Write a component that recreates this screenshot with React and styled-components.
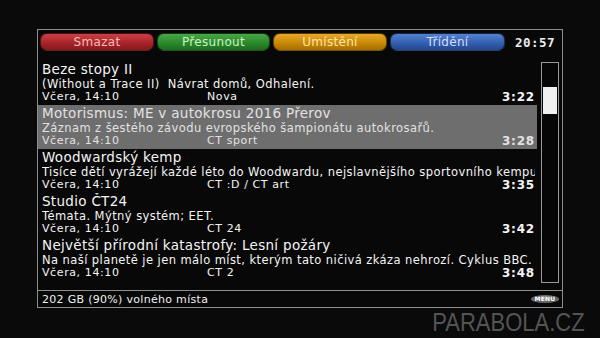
import React from 'react'
import styled, { createGlobalStyle } from 'styled-components'

const GlobalStyle = createGlobalStyle`
    html, body {
        margin: 0;
        padding: 0;
        background: #0a0a0a;
    }
    body {
        width: 600px;
        height: 338px;
        overflow: hidden;
        font-family: "DejaVu Sans", Verdana, sans-serif;
    }
`

// Data
const recordings = [
    {
        title: 'Beze stopy II',
        desc: '(Without a Trace II)\u00a0 Návrat domů, Odhalení.',
        date: 'Včera, 14:10',
        channel: 'Nova',
        length: '3:22',
    },
    {
        title: 'Motorismus: ME v autokrosu 2016 Přerov',
        desc: 'Záznam z šestého závodu evropského šampionátu autokrosařů.',
        date: 'Včera, 14:10',
        channel: 'CT sport',
        length: '3:28',
        selected: true,
    },
    {
        title: 'Woodwardský kemp',
        desc: 'Tisíce dětí vyrážejí každé léto do Woodwardu, nejslavnějšího sportovního kempu',
        date: 'Včera, 14:10',
        channel: 'CT :D / CT art',
        length: '3:35',
    },
    {
        title: 'Studio ČT24',
        desc: 'Témata. Mýtný systém; EET.',
        date: 'Včera, 14:10',
        channel: 'CT 24',
        length: '3:42',
    },
    {
        title: 'Největší přírodní katastrofy: Lesní požáry',
        desc: 'Na naší planetě je jen málo míst, kterým tato ničivá zkáza nehrozí. Cyklus BBC.',
        date: 'Včera, 14:10',
        channel: 'CT 2',
        length: '3:48',
    },
]

const buttons = {
    red: { top: '#cc4046', mid: '#a8242a', bottom: '#861a1e', text: '#f6bcbc' },
    green: { top: '#4aa648', mid: '#2a8a2a', bottom: '#1e6c1e', text: '#cdf2c4' },
    yellow: { top: '#e8a828', mid: '#c88a08', bottom: '#a86c00', text: '#ffe4a6' },
    blue: { top: '#5282d0', mid: '#3460b0', bottom: '#24468e', text: '#d4deff' },
}

const Screen = styled.div`
    width: 600px;
    height: 338px;
    display: flex;
    flex-direction: column;
    background: #0a0a0a;
`

const Frame = styled.div`
    box-sizing: border-box;
    margin: 29px 0 0 37px;
    width: 526px;
    height: 279px;
    border: 1px solid #8e8e8e;
    display: flex;
    flex-direction: column;
    background: #080808;
`

const Header = styled.div`
    height: 31px;
    box-sizing: border-box;
    padding: 3px 0 0 2px;
    display: flex;
    align-items: flex-start;
    gap: 3px;
`

const ColorButton = styled.div`
    width: ${p => p.w}px;
    height: 18px;
    border-radius: 7px;
    box-sizing: border-box;
    border: 1px solid rgba(0, 0, 0, 0.5);
    background: linear-gradient(
        to bottom,
        ${p => buttons[p.color].top} 0%,
        ${p => buttons[p.color].mid} 55%,
        ${p => buttons[p.color].bottom} 100%
    );
    color: ${p => buttons[p.color].text};
    font-size: 12px;
    line-height: 16px;
    letter-spacing: 0.3px;
    text-align: center;
`

const Clock = styled.div`
    flex: 1;
    padding-top: 3px;
    text-align: center;
    font-family: "DejaVu Sans Mono", monospace;
    font-weight: bold;
    font-size: 12.5px;
    line-height: 14px;
    color: #ececec;
    letter-spacing: 0.5px;
`

const Body = styled.div`
    height: 229px;
    display: flex;
`

const List = styled.div`
    width: 499px;
    display: flex;
    flex-direction: column;
`

const Row = styled.div`
    height: 44px;
    box-sizing: border-box;
    padding: 0 2px 0 4px;
    overflow: hidden;
    background: ${p => (p.selected ? '#6e6e6e' : 'transparent')};
    color: ${p => (p.selected ? '#e2e2e2' : '#f4f4f4')};
`

const Title = styled.div`
    font-size: 13.5px;
    line-height: 16px;
    letter-spacing: 0.3px;
    white-space: nowrap;
`

const Desc = styled.div`
    padding-top: 1px;
    font-size: 11.5px;
    line-height: 13px;
    letter-spacing: 0.42px;
    white-space: nowrap;
    overflow: hidden;
`

const Meta = styled.div`
    display: grid;
    grid-template-columns: 165px 1fr auto;
    font-size: 11px;
    line-height: 12px;
    white-space: nowrap;
`

const DateCell = styled.span`
    letter-spacing: 0.6px;
`

const ChannelCell = styled.span`
    letter-spacing: 0.6px;
`

const LengthCell = styled.span`
    font-weight: bold;
    font-size: 12px;
    letter-spacing: 0.8px;
`

const ScrollColumn = styled.div`
    flex: 1;
    padding: 1px 0 0 4px;
`

const Track = styled.div`
    box-sizing: border-box;
    width: 18px;
    height: 221px;
    border: 1px solid #9a9a9a;
    padding: 24px 1px 0 1px;
    background: #060606;
`

const Thumb = styled.div`
    height: 27px;
    background: #f0f0f0;
`

const Footer = styled.div`
    flex: 1;
    border-top: 1px solid #8e8e8e;
    display: flex;
    align-items: center;
    justify-content: space-between;
    padding: 0 3px 0 4px;
`

const FreeSpace = styled.span`
    font-size: 11px;
    letter-spacing: 0.3px;
    color: #f0f0f0;
`

const MenuBadge = styled.span`
    width: 28px;
    height: 8px;
    border-radius: 50%;
    background: radial-gradient(ellipse at 50% 40%, #8a8a8a 0%, #5e5e5e 60%, #b4b4b4 100%);
    color: #ffffff;
    font-size: 6px;
    font-weight: bold;
    line-height: 8px;
    text-align: center;
    letter-spacing: 0.2px;
    font-family: "DejaVu Sans", sans-serif;
`

const Watermark = styled.div`
    align-self: flex-end;
    margin: 1px 15px 0 0;
    font-family: "Liberation Sans", Arial, sans-serif;
    font-size: 26.5px;
    line-height: 26.5px;
    color: #545454;
    transform: scaleX(0.83);
    transform-origin: right center;
`

const Recording = ({ item }) => (
    <Row selected={item.selected}>
        <Title>{item.title}</Title>
        <Desc>{item.desc}</Desc>
        <Meta>
            <DateCell>{item.date}</DateCell>
            <ChannelCell>{item.channel}</ChannelCell>
            <LengthCell>{item.length}</LengthCell>
        </Meta>
    </Row>
)

const App = () => {
    return (
        <Screen>
            <GlobalStyle />
            <Frame>
                <Header>
                    <ColorButton color="red" w={114}>Smazat</ColorButton>
                    <ColorButton color="green" w={113}>Přesunout</ColorButton>
                    <ColorButton color="yellow" w={114}>Umístění</ColorButton>
                    <ColorButton color="blue" w={115}>Třídění</ColorButton>
                    <Clock>20:57</Clock>
                </Header>
                <Body>
                    <List>
                        {recordings.map(item => (
                            <Recording key={item.title} item={item} />
                        ))}
                    </List>
                    <ScrollColumn>
                        <Track>
                            <Thumb />
                        </Track>
                    </ScrollColumn>
                </Body>
                <Footer>
                    <FreeSpace>202 GB (90%) volného místa</FreeSpace>
                    <MenuBadge>MENU</MenuBadge>
                </Footer>
            </Frame>
            <Watermark>PARABOLA.CZ</Watermark>
        </Screen>
    )
}

export default App
